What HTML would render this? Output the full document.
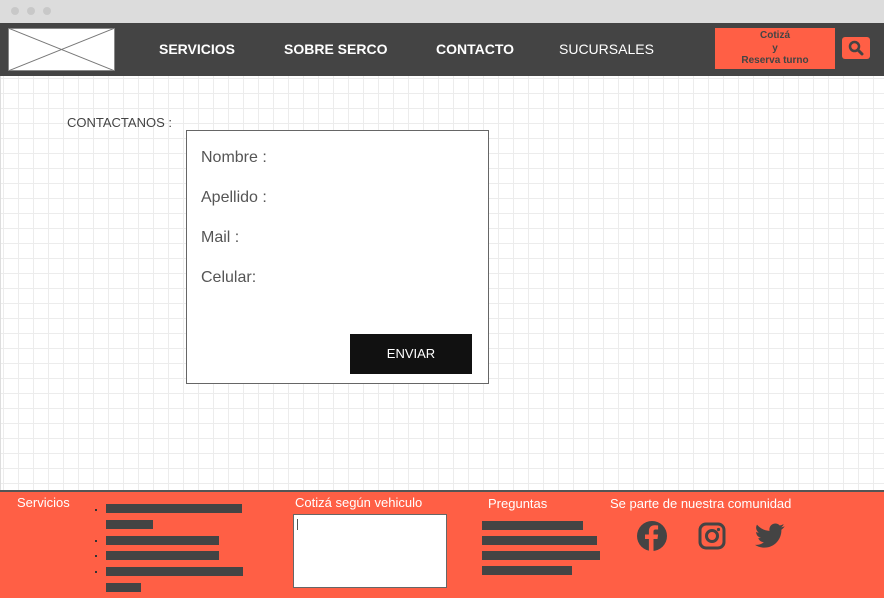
<!DOCTYPE html>
<html><head><meta charset="utf-8"><style>
*{margin:0;padding:0;box-sizing:border-box}
body{width:884px;height:598px;overflow:hidden;font-family:"Liberation Sans",sans-serif;position:relative;background:#fff}
.top{position:absolute;left:0;top:0;width:884px;height:23px;background:#dcdcdc}
.dot{position:absolute;top:7px;width:8px;height:8px;border-radius:50%;background:#c8c8c8}
.nav{position:absolute;left:0;top:23px;width:884px;height:53px;background:#444}
.main{position:absolute;left:0;top:76px;width:884px;height:414px;background-color:#fff;
background-image:linear-gradient(#ececec 1px,transparent 1px),linear-gradient(90deg,#ececec 1px,transparent 1px);background-size:15px 15px;background-position:2px 2px;border-left:1px solid #ddd}
.navt{position:absolute;top:41px;color:#fff;font-size:14px;font-weight:bold}
.abs{position:absolute}
.foot{position:absolute;left:0;top:490px;width:884px;height:108px;background:#ff5f45;border-top:2px solid #555}
.bar{position:absolute;height:9px;background:#444}
.ft{position:absolute;color:#fff;font-size:13px}
.bul{position:absolute;width:2px;height:2px;background:#333}
</style></head><body>
<div class="top"><div class="dot" style="left:11px"></div><div class="dot" style="left:27px"></div><div class="dot" style="left:43px"></div></div>
<div class="nav"></div>
<svg class="abs" style="left:8px;top:28px" width="107" height="43"><rect x="0.5" y="0.5" width="106" height="42" fill="#fff" stroke="#888"/><line x1="0" y1="0" x2="107" y2="43" stroke="#777"/><line x1="107" y1="0" x2="0" y2="43" stroke="#777"/></svg>
<div class="navt" style="left:159px">SERVICIOS</div>
<div class="navt" style="left:284px">SOBRE SERCO</div>
<div class="navt" style="left:436px">CONTACTO</div>
<div class="navt" style="left:559px;font-weight:normal">SUCURSALES</div>
<div class="abs" style="left:715px;top:28px;width:120px;height:41px;background:#ff5f45;color:#444;font-size:10px;font-weight:bold;text-align:center;line-height:12.5px;padding-top:2px">Cotizá<br>y<br>Reserva turno</div>
<div class="abs" style="left:842px;top:37px;width:28px;height:22px;background:#ff5f45;border-radius:3px"></div>
<svg class="abs" style="left:848px;top:40px" width="16" height="16"><circle cx="6.5" cy="6.5" r="4.5" fill="none" stroke="#444" stroke-width="2.5"/><line x1="10" y1="10" x2="14" y2="14" stroke="#444" stroke-width="3" stroke-linecap="round"/></svg>
<div class="main"></div>
<div class="abs" style="left:67px;top:115px;font-size:13px;color:#444">CONTACTANOS :</div>
<div class="abs" style="left:186px;top:130px;width:303px;height:254px;background:#fff;border:1px solid #666"></div>
<div class="abs" style="left:201px;top:148px;font-size:16px;color:#555;line-height:20px">Nombre :</div>
<div class="abs" style="left:201px;top:188px;font-size:16px;color:#555;line-height:20px">Apellido :</div>
<div class="abs" style="left:201px;top:228px;font-size:16px;color:#555;line-height:20px">Mail :</div>
<div class="abs" style="left:201px;top:268px;font-size:16px;color:#555;line-height:20px">Celular:</div>
<div class="abs" style="left:350px;top:334px;width:122px;height:40px;background:#111;color:#fff;font-size:13px;text-align:center;line-height:40px">ENVIAR</div>
<div class="foot"></div>
<div class="ft" style="left:17px;top:495px">Servicios</div>
<div class="bul" style="left:95px;top:509px"></div><div class="bar" style="left:106px;top:504px;width:136px"></div>
<div class="bar" style="left:106px;top:520px;width:47px"></div>
<div class="bul" style="left:95px;top:540px"></div><div class="bar" style="left:106px;top:536px;width:113px"></div>
<div class="bul" style="left:95px;top:555px"></div><div class="bar" style="left:106px;top:551px;width:113px"></div>
<div class="bul" style="left:95px;top:571px"></div><div class="bar" style="left:106px;top:567px;width:137px"></div>
<div class="bar" style="left:106px;top:583px;width:35px"></div>
<div class="ft" style="left:295px;top:495px">Cotizá según vehiculo</div>
<div class="abs" style="left:293px;top:514px;width:154px;height:74px;background:#fff;border:1px solid #666"></div>
<div class="abs" style="left:297px;top:519px;width:1px;height:11px;background:#555"></div>
<div class="ft" style="left:488px;top:496px">Preguntas</div>
<div class="bar" style="left:482px;top:521px;width:101px"></div>
<div class="bar" style="left:482px;top:536px;width:115px"></div>
<div class="bar" style="left:482px;top:551px;width:118px"></div>
<div class="bar" style="left:482px;top:566px;width:90px"></div>
<div class="ft" style="left:610px;top:496px">Se parte de nuestra comunidad</div>
<svg class="abs" style="left:636px;top:520px" width="32" height="32" viewBox="0 0 32 32"><circle cx="16" cy="16" r="15" fill="#444"/><path d="M17.5 31V19h4l.6-4.5h-4.6v-2.8c0-1.3.4-2.2 2.2-2.2h2.4V5.5c-.4-.1-1.8-.2-3.5-.2-3.4 0-5.7 2.1-5.7 5.9v3.3H9v4.5h3.9v12z" fill="#ff5f45"/></svg>
<svg class="abs" style="left:698px;top:522px" width="28" height="28" viewBox="0 0 28 28"><rect x="2" y="2" width="24" height="24" rx="6" fill="none" stroke="#444" stroke-width="3"/><circle cx="14" cy="14" r="5.5" fill="none" stroke="#444" stroke-width="3"/><circle cx="20.5" cy="7.5" r="1.6" fill="#444"/></svg>
<svg class="abs" style="left:755px;top:523px" width="30" height="26" viewBox="0 0 24 20"><path d="M23.6 2.3c-.9.4-1.8.6-2.8.8 1-.6 1.8-1.5 2.1-2.7-.9.6-2 1-3.1 1.2C18.9.6 17.6 0 16.3 0c-2.7 0-4.8 2.2-4.8 4.8 0 .4 0 .8.1 1.1C7.5 5.7 4 3.8 1.6.9c-.4.7-.7 1.6-.7 2.4 0 1.7.9 3.2 2.2 4-.8 0-1.5-.2-2.2-.6v.1c0 2.3 1.7 4.3 3.9 4.7-.4.1-.8.2-1.3.2-.3 0-.6 0-.9-.1.6 1.9 2.4 3.3 4.5 3.4-1.7 1.3-3.7 2.1-6 2.1H0c2.1 1.4 4.7 2.2 7.4 2.2 8.9 0 13.7-7.4 13.7-13.7v-.6c1-.7 1.8-1.6 2.5-2.5z" fill="#444"/></svg>
</body></html>
